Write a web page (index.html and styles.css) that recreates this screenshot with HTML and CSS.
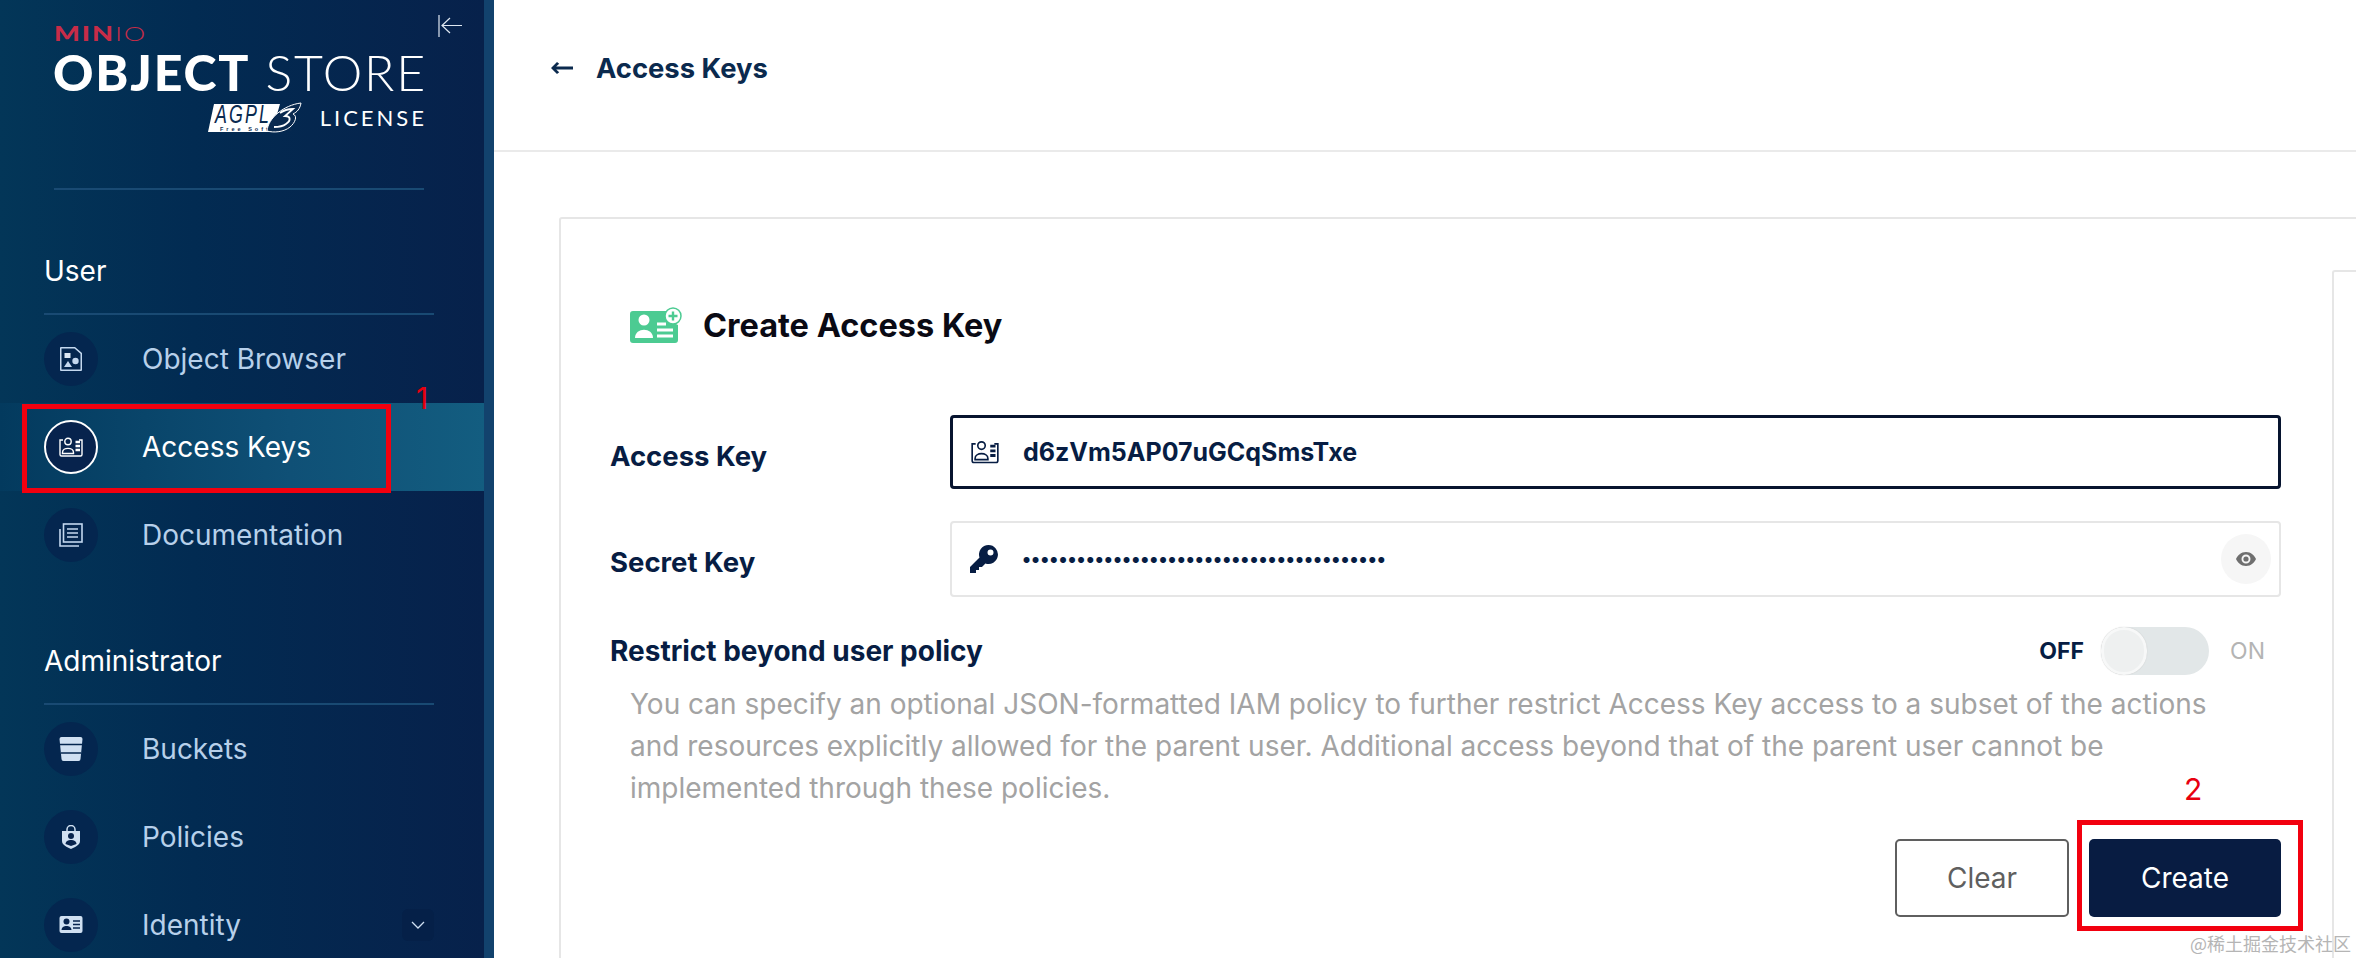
FILE: index.html
```html
<!DOCTYPE html>
<html lang="en">
<head>
    <meta charset="UTF-8">
    <title>MinIO Console</title>
    <link rel="stylesheet" href="styles.css">
</head>
<body>
    <aside class="sidebar">
        <div class="brand">
            <div class="logo">
                <div class="logo-minio"><b>MIN</b>IO</div>
                <div class="logo-product"><b>OBJECT</b> STORE</div>
                <div class="logo-license">
                    <svg class="agpl" viewBox="0 0 94 31" width="94" height="31">
                        <path d="M6 2H72L64 30H0z" fill="#fff"/>
                        <text x="7" y="21" font-family="Liberation Sans" font-style="italic" font-size="25" fill="#0a2a50" textLength="56" lengthAdjust="spacingAndGlyphs">AGPL</text>
                        <text x="12" y="28.500" font-family="Liberation Sans" font-weight="700" font-size="5.500" fill="#0a2a50">Free Software</text>
                        <path d="M59 29C60 16 76 3 93 1C92 7 89 10 85 12C90 14 87 21 82 25C76 30 66 31 59 29z" fill="#0a2a50" stroke="#fff" stroke-width="1"/>
                        <path d="M72 11C76 8 81 7 85 7L77 14C83 14 83 19 78 22C74 25 70 25 66 25" fill="none" stroke="#fff" stroke-width="1.800"/>
                    </svg>
                    <span>LICENSE</span>
                </div>
            </div>
            <svg class="collapse" viewBox="0 0 24 24" width="24" height="24" fill="none" stroke="#dfe8f2" stroke-width="1.200">
                <path d="M1 1V23M24 11.500H4M12 4L4 11.500L12 19"/>
            </svg>
        </div>
        <div class="brand-rule"></div>

        <div class="nav-title">User</div>
        <div class="nav-item">
            <span class="nav-icon">
                <svg viewBox="0 0 22 24" width="22" height="24" fill="#c4d8ef"><path fill-rule="evenodd" d="M1 0H15L22 6V23a1 1 0 0 1-1 1H1a1 1 0 0 1-1-1V1a1 1 0 0 1 1-1zM1.500 1.500V22.500H20.500V6.700L14.500 1.500z"/><rect x="4.500" y="6" width="6" height="5" fill="#dce8f5"/><circle cx="15.500" cy="14" r="3.200"/><path d="M8 14L12 20H4z"/></svg>
            </span>
            <span>Object Browser</span>
        </div>
        <div class="nav-item active">
            <span class="nav-icon">
                <svg viewBox="0 0 24 20" width="24" height="20" fill="none" stroke="#fff" stroke-width="1.400"><path d="M4 3H1V17.500a1.500 1.500 0 0 0 1.500 1.500H21.500a1.500 1.500 0 0 0 1.500-1.500V3H20"/><circle cx="9" cy="4.500" r="3.200"/><path d="M3.500 15.500C3.500 10 14.500 10 14.500 15.500V16.500H3.500z"/><path d="M16.500 5H21M16.500 9H21M16.500 13H21" stroke-width="2.400"/></svg>
            </span>
            <span>Access Keys</span>
        </div>
        <div class="nav-item">
            <span class="nav-icon">
                <svg viewBox="0 0 24 24" width="24" height="24" fill="none" stroke="#c4d8ef" stroke-width="1.600"><rect x="4.500" y="1" width="18.500" height="18"/><path d="M8 6H19M8 10H19M8 14H19M1 6V23H20"/></svg>
            </span>
            <span>Documentation</span>
        </div>

        <div class="nav-title admin">Administrator</div>
        <div class="nav-item">
            <span class="nav-icon">
                <svg viewBox="0 0 24 24" width="24" height="24"><path d="M0.500 2a2 2 0 0 1 2-2H21.500a2 2 0 0 1 2 2L21.500 22a2 2 0 0 1-2 2H4.500a2 2 0 0 1-2-2z" fill="#d0e0f2"/><path d="M1 7.500H23M2 16H22" stroke="#04264f" stroke-width="1.500"/></svg>
            </span>
            <span>Buckets</span>
        </div>
        <div class="nav-item">
            <span class="nav-icon">
                <svg viewBox="0 0 20 24" width="20" height="24"><path d="M6 6V4.500a4 4 0 0 1 8 0V6" fill="none" stroke="#d0e0f2" stroke-width="1.500"/><path d="M1 6H19V16C19 20 14 22 10 24C6 22 1 20 1 16z" fill="#d0e0f2"/><circle cx="10" cy="11" r="3" fill="#07234d"/><path d="M4.500 19C4.500 13.500 15.500 13.500 15.500 19L10 21z" fill="#07234d"/></svg>
            </span>
            <span>Policies</span>
        </div>
        <div class="nav-item">
            <span class="nav-icon">
                <svg viewBox="0 0 24 18" width="24" height="18"><rect width="23" height="17" x="0.500" rx="2" fill="#d0e0f2"/><circle cx="7.500" cy="5.500" r="3" fill="#07234d"/><path d="M2.500 14C2.500 8.500 12.500 8.500 12.500 14z" fill="#07234d"/><path d="M14 5H21M14 8.500H21M14 12H21" stroke="#07234d" stroke-width="1.300"/></svg>
            </span>
            <span class="nav-label">Identity</span>
            <span class="nav-chevron">
                <svg viewBox="0 0 14 8" width="14" height="8" fill="none" stroke="#d0e0f2" stroke-width="1.300"><path d="M1 1L7 7L13 1"/></svg>
            </span>
        </div>
    </aside>

    <main class="main">
        <header class="topbar">
            <svg viewBox="0 0 22 12" width="22" height="12" fill="#0b2a4e"><path d="M6 0L8.200 1.800L5.200 4.400H22V7.600H5.200L8.200 10.200L6 12L0 6z"/></svg>
            <span class="topbar-title">Access Keys</span>
        </header>
        <div class="content">
            <section class="card">
                <div class="form-pane">
                    <h1 class="form-title">
                        <svg viewBox="0 0 52 36" width="52" height="36">
                            <path d="M3 4H38a14 14 0 0 0 10 14V33a3 3 0 0 1-3 3H3a3 3 0 0 1-3-3V7a3 3 0 0 1 3-3z" fill="#4ccb92"/>
                            <circle cx="14" cy="13" r="5.500" fill="#fff"/>
                            <path d="M5 31C5 20 23 20 23 31z" fill="#fff"/>
                            <path d="M27 17H36M27 23H43M27 29H43" stroke="#fff" stroke-width="3"/>
                            <circle cx="43" cy="9" r="8" fill="#fff" stroke="#4ccb92" stroke-width="1.500"/>
                            <path d="M43 4.500V13.500M38.500 9H47.500" stroke="#4ccb92" stroke-width="2.400"/>
                        </svg>
                        <span>Create Access Key</span>
                    </h1>

                    <div class="field-row">
                        <label class="field-label">Access Key</label>
                        <div class="input focused">
                            <svg viewBox="0 0 24 20" width="28" height="24" fill="none" stroke="#071d43" stroke-width="1.400"><path d="M4 3H1V17.500a1.500 1.500 0 0 0 1.500 1.500H21.500a1.500 1.500 0 0 0 1.500-1.500V3H20"/><circle cx="9" cy="4.500" r="3.200"/><path d="M3.500 15.500C3.500 10 14.500 10 14.500 15.500V16.500H3.500z"/><path d="M16.500 5H21M16.500 9H21M16.500 13H21" stroke-width="2.400"/></svg>
                            <span class="input-value">d6zVm5AP07uGCqSmsTxe</span>
                        </div>
                    </div>
                    <div class="field-row">
                        <label class="field-label">Secret Key</label>
                        <div class="input">
                            <svg viewBox="0 0 28 28" width="28" height="28" fill="#071d43"><path fill-rule="evenodd" d="M18.500 0A9.500 9.500 0 1 1 15.400 18.500L12 22H9V25H6V28H0V22L9.500 12.600A9.500 9.500 0 0 1 18.500 0zM20.500 4.500A3 3 0 1 0 20.500 10.500A3 3 0 1 0 20.500 4.500z"/></svg>
                            <span class="input-value dots">••••••••••••••••••••••••••••••••••••••••</span>
                            <span class="eye">
                                <svg viewBox="0 0 20 14" width="20" height="14"><path fill-rule="evenodd" d="M10 0C15 0 18.500 3.500 20 7C18.500 10.500 15 14 10 14C5 14 1.500 10.500 0 7C1.500 3.500 5 0 10 0zM10 2.500A4.500 4.500 0 1 0 10 11.500A4.500 4.500 0 1 0 10 2.500z" fill="#6f6f6f"/><circle cx="10" cy="7" r="2.600" fill="#6f6f6f"/></svg>
                            </span>
                        </div>
                    </div>

                    <div class="switch-row">
                        <span class="switch-label">Restrict beyond user policy</span>
                        <span class="switch-off">OFF</span>
                        <span class="switch"><span class="switch-knob"></span></span>
                        <span class="switch-on">ON</span>
                    </div>
                    <p class="switch-help">You can specify an optional JSON-formatted IAM policy to further restrict Access Key access to a subset of the actions and resources explicitly allowed for the parent user. Additional access beyond that of the parent user cannot be implemented through these policies.</p>

                    <div class="actions">
                        <button class="btn btn-clear">Clear</button>
                        <button class="btn btn-create">Create</button>
                    </div>
                </div>
                <div class="help-pane"></div>
            </section>
        </div>
    </main>

    <!-- annotations drawn over the screenshot -->
    <div class="mark mark-keys"></div>
    <div class="mark mark-create"></div>
    <span class="mark-num num-1">1</span>
    <span class="mark-num num-2">2</span>
    <span class="watermark">@稀土掘金技术社区</span>
</body>
</html>
```

FILE: styles.css
```css
* {
    box-sizing: border-box;
}

html, body {
    height: 958px;
    margin: 0;
    overflow: hidden;
}

body {
    display: flex;
    position: relative;
    font-family: Inter, "Liberation Sans", sans-serif;
    background-color: #fff;
}

/* sidebar */
.sidebar {
    flex: 0 0 494px;
    height: 958px;
    overflow: hidden;
    border-right: 10px solid #12426d;
    background: linear-gradient(90deg, #033658 0%, #022b52 40%, #07214b 100%);
    color: #fff;
}

.brand {
    display: flex;
    align-items: flex-start;
    gap: 14px;
    height: 188px;
    padding: 14px 0 0 54px;
}

.logo {
    width: 370px;
    padding-top: 12px;
}

.logo-minio {
    height: 15px;
    font-family: Lato, sans-serif;
    font-size: 20px;
    line-height: 15px;
    font-weight: 300;
    letter-spacing: 1.4px;
    color: #c72c48;
    transform: scaleX(1.36);
    transform-origin: left;
}

.logo-minio b {
    font-weight: 900;
}

.logo-product {
    margin-top: 11px;
    margin-left: -1px;
    font-family: Lato, sans-serif;
    font-size: 50px;
    line-height: 40px;
    font-weight: 300;
    letter-spacing: 1.800px;
    white-space: nowrap;
}

.logo-product b {
    font-weight: 900;
}

.logo-license {
    display: flex;
    justify-content: flex-end;
    align-items: center;
    gap: 18px;
    margin-top: 10px;
    margin-right: -3px;
    font-family: Lato, sans-serif;
    font-size: 22px;
    letter-spacing: 3px;
}

.agpl {
    overflow: visible;
}

.brand-rule {
    width: 370px;
    height: 2px;
    margin-left: 54px;
    background-color: #194a73;
}

.nav-title {
    width: 390px;
    height: 51px;
    margin: 64px 0 0 44px;
    padding-bottom: 8px;
    border-bottom: 2px solid #194a73;
    font-size: 28px;
    line-height: 34px;
    font-weight: 400;
    box-sizing: content-box;
}

.nav-title.admin {
    margin-top: 65px;
}

.nav-item {
    display: flex;
    align-items: center;
    height: 88px;
    padding-left: 44px;
    font-size: 28px;
    color: #b7d0ea;
}

.nav-icon {
    display: flex;
    flex: 0 0 54px;
    justify-content: center;
    align-items: center;
    height: 54px;
    margin-right: 44px;
    border-radius: 50%;
    background-color: #04264f;
}

.nav-item.active {
    background: linear-gradient(90deg, #033a5e 0%, #0f5076 60%, #135d80 100%);
    color: #fff;
}

.nav-item.active .nav-icon {
    border: 2px solid #fff;
    background-color: #07234d;
}

.nav-label {
    flex: 1;
}

.nav-chevron {
    display: flex;
    justify-content: center;
    align-items: center;
    width: 32px;
    height: 32px;
    margin-right: 50px;
    border-radius: 6px;
    background-color: #052048;
}

/* main */
.main {
    flex: 1;
    min-width: 0;
}

.topbar {
    display: flex;
    align-items: center;
    gap: 23px;
    height: 152px;
    padding: 0 0 14px 57px;
    border-bottom: 2px solid #eaeaea;
}

.topbar-title {
    font-size: 27.400px;
    font-weight: 700;
    color: #0b2a4e;
}

.content {
    padding: 65px 0 0 65px;
}

.card {
    display: flex;
    height: 760px;
    margin-right: -30px;
    border: 2px solid #e6e6e6;
    border-radius: 3px;
}

.form-pane {
    flex: 0 0 1771px;
    padding: 87px 51px 0 49px;
}

.form-title {
    display: flex;
    align-items: center;
    gap: 21px;
    height: 38px;
    margin: 0 0 71px 20px;
    font-size: 32.500px;
    font-weight: 700;
    color: #0a0a14;
}

.field-row {
    display: flex;
    height: 74px;
    margin-bottom: 32px;
}

.field-row + .field-row {
    height: 76px;
    margin-bottom: 30px;
}

.field-label {
    flex: 0 0 340px;
    padding-top: 24px;
    font-size: 27.500px;
    line-height: 34px;
    font-weight: 700;
    color: #071d43;
}

.input {
    display: flex;
    flex: 1;
    align-items: center;
    gap: 24px;
    padding: 0 8px 0 18px;
    border: 2px solid #e6e6e6;
    border-radius: 4px;
    color: #071d43;
}

.input.focused {
    border: 3px solid #07142f;
}

.input-value {
    flex: 1;
    font-size: 25px;
    font-weight: 700;
}

.input-value.dots {
    font-size: 19.200px;
}

.eye {
    display: flex;
    justify-content: center;
    align-items: center;
    width: 50px;
    height: 50px;
    border-radius: 50%;
    background-color: #f6f6f6;
}

.switch-row {
    display: flex;
    align-items: center;
    height: 48px;
}

.switch-label {
    flex: 1;
    font-size: 28px;
    font-weight: 700;
    color: #071d43;
}

.switch-off {
    font-size: 23px;
    font-weight: 700;
    color: #071d43;
}

.switch {
    display: block;
    width: 108px;
    height: 48px;
    margin: 0 21px 0 17px;
    border-radius: 24px;
    background-color: #e2e7e8;
}

.switch-knob {
    display: block;
    width: 46px;
    height: 48px;
    border: 3px solid #f7f8f8;
    border-radius: 24px;
    background-color: #eef0f0;
    box-shadow: 0 0 1px #bbb;
}

.switch-on {
    margin-right: 16px;
    font-size: 23px;
    color: #b4b4b4;
}

.switch-help {
    width: 1600px;
    margin: 8px 0 0 20px;
    font-size: 28px;
    line-height: 42px;
    color: #a3a3a3;
}

.actions {
    display: flex;
    justify-content: flex-end;
    gap: 20px;
    margin-top: 30px;
}

.btn {
    height: 78px;
    border-radius: 5px;
    font-family: Inter, "Liberation Sans", sans-serif;
    font-size: 28px;
}

.btn-clear {
    width: 174px;
    border: 2px solid #5f5f5f;
    background-color: #fff;
    color: #5f5f5f;
}

.btn-create {
    width: 192px;
    border: none;
    background-color: #081c42;
    color: #fff;
}

.help-pane {
    flex: 1;
    margin-top: 51px;
    border-top: 2px solid #e6e6e6;
    border-left: 2px solid #e6e6e6;
    border-top-left-radius: 3px;
}

/* annotations */
.mark {
    position: absolute;
    border: 5px solid #f2000f;
}

.mark-keys {
    left: 22px;
    top: 404px;
    width: 369px;
    height: 89px;
}

.mark-create {
    left: 2077px;
    top: 820px;
    width: 226px;
    height: 111px;
}

.mark-num {
    position: absolute;
    font-size: 30px;
    line-height: 30px;
    color: #e8000f;
}

.num-1 {
    left: 416px;
    top: 383px;
}

.num-2 {
    left: 2184px;
    top: 774px;
}

.watermark {
    position: absolute;
    left: 2190px;
    top: 930px;
    font-family: "Noto Sans CJK SC", sans-serif;
    font-size: 18px;
    color: #b5b5b5;
}
```
